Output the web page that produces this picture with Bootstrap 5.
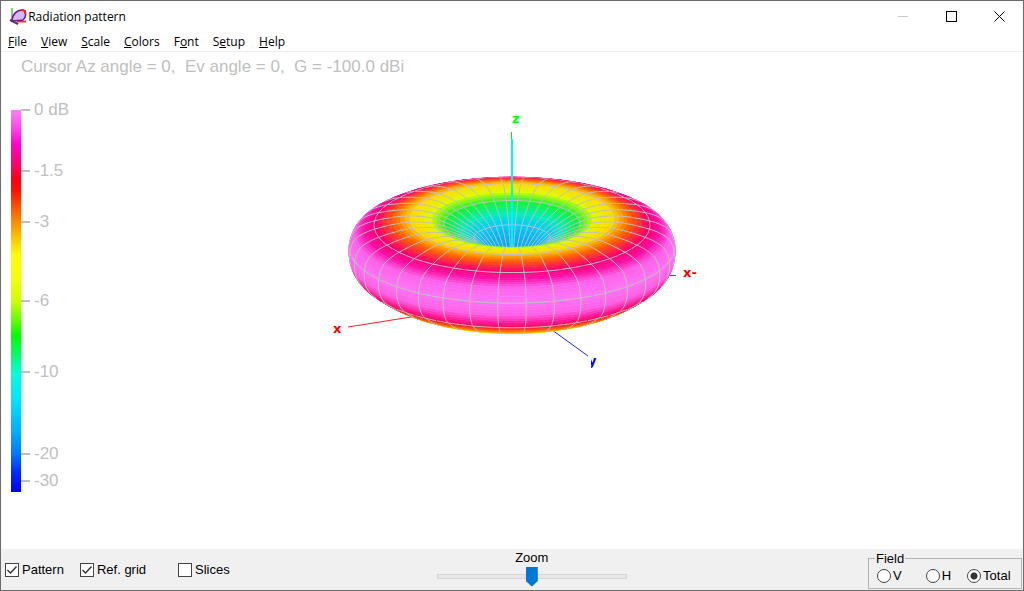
<!DOCTYPE html>
<html lang="en">
<head>
<meta charset="utf-8">
<meta name="viewport" content="width=device-width, initial-scale=1">
<title>Radiation pattern</title>
<link href="https://cdn.jsdelivr.net/npm/bootstrap@5.3.0/dist/css/bootstrap.min.css" rel="stylesheet">
<style>
  body { font-family: "Liberation Sans", Arial, sans-serif; font-size: 13px; line-height: 16px; color: #000; background: #fff; }
  .app-window { border: 1px solid #6b6b6b; }
  .title-bar, .menu-bar { font-family: "Open Sans", "Noto Sans", sans-serif; font-size: 12px; }
  .title-bar { height: 31px; padding-left: 8px; }
  .win-btn { width: 48px; height: 30px; padding: 0; border: 0; background: none; display: grid; place-items: center; }
  .menu-bar { height: 20px; padding-left: 7px; gap: 14px; border-bottom: 1px solid #eee; }
  .menu-bar button { padding: 0; border: 0; background: none; color: #000; }
  .readout { height: 28px; padding: 5px 0 0 20px; font-size: 17px; line-height: 20px; color: #c0c0c0; white-space: pre; }
  .plot-grid { display: grid; grid-template-columns: 1fr auto 1fr; align-items: start; }
  .scale-text { font-size: 17px; fill: #c0c0c0; }
  .axis-text { font: bold 13px "DejaVu Sans", sans-serif; }
  .control-bar { display: grid; grid-template-columns: 11fr 190px 10fr; height: 41px; background: #f0f0f0; }
  .tick-box { display: flex; align-items: center; gap: 3px; }
  .tick-box .form-check-input { width: 14px; height: 14px; margin: 0; border: 1px solid #444; border-radius: 0; background-color: #fff; background-size: 12px 12px; }
  .tick-box .form-check-input:checked { background-image: url("data:image/svg+xml,%3Csvg xmlns='http://www.w3.org/2000/svg' viewBox='0 0 12 12'%3E%3Cpath fill='none' stroke='%23333' stroke-width='1.4' d='M1.5 6l3 3 6-6.500'/%3E%3C/svg%3E"); }
  .tick-box .form-check-input[type=radio] { border-radius: 50%; }
  .tick-box .form-check-input[type=radio]:checked { background-image: radial-gradient(circle, #333 0 3px, transparent 4px); }
  .zoom-range { appearance: none; -webkit-appearance: none; display: block; width: 100%; height: 20px; margin: 0; background: none; }
  .zoom-range::-webkit-slider-runnable-track { height: 5px; background: #e7e7e7; border: 1px solid #d6d6d6; }
  .zoom-range::-webkit-slider-thumb { -webkit-appearance: none; width: 12px; height: 20px; margin-top: -8px; background: #0078d7; clip-path: polygon(0 0, 100% 0, 100% 72%, 50% 100%, 0 72%); }
  .zoom-group { padding-top: 1px; }
  .field-box { position: relative; width: 154px; height: 31px; margin: 9px 1px 0 0; padding: 0 0 0 8px; border: 1px solid #b4b4b4; }
  .field-box .tick-box { gap: 2px; }
  .field-box legend { position: absolute; top: -8px; left: 6px; width: auto; margin: 0; padding: 0 1px; font-size: 13px; line-height: 16px; background: #f0f0f0; }
</style>
</head>
<body>
<div class="app-window d-flex flex-column min-vh-100">
  <header class="title-bar d-flex align-items-center">
    <svg width="18" height="18" viewBox="0 0 18 18" aria-hidden="true">
      <path d="M3 0v12" stroke="#7fd08a" stroke-width="2"/>
      <path d="M8 13.500h9" stroke="#f33" stroke-width="2"/>
      <path d="M1 12l8 4" stroke="#347" stroke-width="2"/>
      <path d="M3 13C3 7 8 1 14 2c4 1 3 8 0 10-3 1-7 0-11 1z" fill="#d3b9ee" stroke="#83108f" stroke-width="1.500"/>
      <path d="M13 2l3 1v3" fill="none" stroke="#f22" stroke-width="2"/>
    </svg>
    <span class="me-auto">&#8202;Radiation pattern</span>
    <button class="win-btn" aria-label="Minimize"><svg width="10" height="10"><path d="M0 4.500h10" stroke="#c8c8c8"/></svg></button>
    <button class="win-btn" aria-label="Maximize"><svg width="11" height="11"><rect x=".5" y=".5" width="10" height="10" fill="none" stroke="#000"/></svg></button>
    <button class="win-btn" aria-label="Close"><svg width="11" height="11"><path d="M.5 .5l10 10m0-10l-10 10" stroke="#000"/></svg></button>
  </header>
  <nav class="menu-bar d-flex align-items-center">
    <button><u>F</u>ile</button><button><u>V</u>iew</button><button><u>S</u>cale</button><button><u>C</u>olors</button><button>F<u>o</u>nt</button><button>S<u>e</u>tup</button><button><u>H</u>elp</button>
  </nav>
  <main class="flex-grow-1">
    <div class="readout">Cursor Az angle = 0,  Ev angle = 0,  G = -100.0 dBi</div>
    <div class="plot-grid">
      <svg id="scale" width="90" height="420" viewBox="1 80 90 420">
        <defs><linearGradient id="db" x1="0" y1="0" x2="0" y2="1">
          <stop offset="0" stop-color="#ff80f4"/><stop offset=".04" stop-color="#ff50f0"/><stop offset=".09" stop-color="#ff00cc"/>
          <stop offset=".14" stop-color="#ff0070"/><stop offset=".18" stop-color="#ff0010"/><stop offset=".21" stop-color="#ff1000"/>
          <stop offset=".29" stop-color="#ff8800"/><stop offset=".38" stop-color="#ffff00"/><stop offset=".44" stop-color="#f4ff00"/>
          <stop offset=".5" stop-color="#d0ff00"/><stop offset=".55" stop-color="#60ff00"/><stop offset=".59" stop-color="#00ff00"/>
          <stop offset=".63" stop-color="#00ff50"/><stop offset=".69" stop-color="#00ffe0"/><stop offset=".76" stop-color="#00e4ff"/>
          <stop offset=".84" stop-color="#00b0ff"/><stop offset=".9" stop-color="#0078ff"/><stop offset=".95" stop-color="#0028ff"/><stop offset="1" stop-color="#0000ff"/>
        </linearGradient></defs>
        <rect x="11" y="110" width="10" height="382" fill="url(#db)"/>
      </svg>
      <svg id="scene" width="380" height="300" viewBox="322 80 380 300">
        <clipPath id="half"><rect x="591" y="350" width="10" height="24"/></clipPath>
        <path d="M348 327L512 301" stroke="#f22"/>
        <path d="M512 301L588 356" stroke="#22e"/>
        <g id="surface"></g>
        <path d="M670 275.500h6" stroke="#a33"/>
        <path d="M511.500 132v8" stroke="#0e0"/>
        <path d="M512 139V247" stroke="#00f4ff" stroke-width="2"/>
        <g class="axis-text">
          <text x="512" y="123" fill="#0f0">z</text>
          <text x="333" y="333" fill="#f00">x</text>
          <text x="683" y="277" fill="#f00">x-</text>
          <text x="588" y="365" fill="#00f" clip-path="url(#half)">y</text>
        </g>
      </svg>
      <span></span>
    </div>
  </main>
  <footer class="control-bar">
    <div class="d-flex align-items-center ps-1">
      <div class="tick-box me-3"><input class="form-check-input" type="checkbox" id="cPattern" checked><label for="cPattern">Pattern</label></div>
      <div class="tick-box me-4"><input class="form-check-input" type="checkbox" id="cGrid" checked><label for="cGrid">Ref. grid</label></div>
      <div class="tick-box ms-2"><input class="form-check-input" type="checkbox" id="cSlices"><label for="cSlices">Slices</label></div>
    </div>
    <div class="zoom-group text-center">
      <label class="d-block" for="zoom">Zoom</label>
      <input class="zoom-range" type="range" id="zoom" value="50">
    </div>
    <fieldset class="field-box d-flex align-items-end ms-auto pb-1">
      <legend>Field</legend>
      <div class="tick-box me-4"><input class="form-check-input" type="radio" name="field" id="fV"><label for="fV">V</label></div>
      <div class="tick-box me-3"><input class="form-check-input" type="radio" name="field" id="fH"><label for="fH">H</label></div>
      <div class="tick-box"><input class="form-check-input" type="radio" name="field" id="fT" checked><label for="fT">Total</label></div>
    </fieldset>
  </footer>
</div>
<script src="https://cdn.jsdelivr.net/npm/bootstrap@5.3.0/dist/js/bootstrap.bundle.min.js"></script>
<script>
  // dB scale: label and height of each tick
  const ticks = [['0 dB', 110], ['-1.5', 171], ['-3', 222], ['-6', 301], ['-10', 372], ['-20', 454], ['-30', 481]];
  document.getElementById('scale').insertAdjacentHTML('beforeend', ticks.map(([t, y]) =>
    `<path d="M21 ${y}h9" stroke="#c0c0c0" stroke-width="2"/><text class="scale-text" x="34" y="${y + 5}">${t}</text>`).join(''));

  // Surface of revolution: radius, projected centre height, colour, grid ring or not
  const P = [
    [95, 299, 0xf0f000, 0], [120, 292, 0xffe000, 0], [138, 284, 0xff7000, 0], [150, 276, 0xff0040, 1], [157, 270, 0xff1090, 0], [162, 260, 0xff60e8, 0],
    [163, 247, 0xff74f6, 1], [158, 235, 0xff60ec, 0], [149, 229, 0xff10a8, 0], [138, 225, 0xff0070, 1], [120, 221, 0xff6400, 0],
    [103, 219, 0xffdc00, 1], [84, 220, 0xe0fc00, 0], [68, 224, 0x10f830, 1], [52, 231, 0x00f4c0, 0],
    [38, 238, 0x00ccff, 1], [18, 256, 0x0098ff, 0], [1, 275, 0x0080ff, 0]];
  const tilt = 0.345, up = 0.94, N = 4, rows = [];
  const cat = (a, b, c, d, t) => b + t / 2 * (c - a + t * (2 * a - 5 * b + 4 * c - d + t * (3 * (b - c) + d - a)));
  const ch = (c, s) => c >> s & 255;
  for (let i = 0; i < P.length - 1; i++) for (let k = 0; k < N; k++) {
    const q = [P[Math.max(i - 1, 0)], P[i], P[i + 1], P[Math.min(i + 2, P.length - 1)]], t = k / N;
    rows.push({ r: cat(...q.map(p => p[0]), t), y: cat(...q.map(p => p[1]), t), ring: k === 0 && P[i][3],
      c: [16, 8, 0].map(s => Math.round(ch(q[1][2], s) * (1 - t) + ch(q[2][2], s) * t)) });
  }
  const rad = Math.PI / 180, items = [];
  const pt = (o, a) => [(512 + o.r * Math.sin(a * rad)).toFixed(1), (o.y + o.r * tilt * Math.cos(a * rad)).toFixed(1)].join(' ');
  const depth = (o, a) => o.r * Math.cos(a * rad) * up + (250 - o.y) / up * tilt;
  for (let a = -180; a < 180; a += 5) rows.forEach((o, j) => {
    const n = rows[j + 1];
    if (o.ring) items.push([depth(o, a + 2.5) + 4, `<path d="M${pt(o, a)}L${pt(o, a + 5)}" stroke="#c0c0c0"/>`]);
    if (!n) return;
    const c = `rgb(${o.c})`, d = (depth(o, a + 2.5) + depth(n, a + 2.5)) / 2;
    items.push([d, `<path d="M${pt(o, a)}L${pt(o, a + 5)}L${pt(n, a + 5)}L${pt(n, a)}z" fill="${c}" stroke="${c}" stroke-width=".6"/>`]);
    if (Math.abs(a) % 10 === 5) items.push([(depth(o, a) + depth(n, a)) / 2 + 10, `<path d="M${pt(o, a)}L${pt(n, a)}" stroke="#c0c0c0"/>`]);
  });
  items.sort((p, q) => p[0] - q[0]);
  document.getElementById('surface').innerHTML = items.map(p => p[1]).join('');
</script>
</body>
</html>
